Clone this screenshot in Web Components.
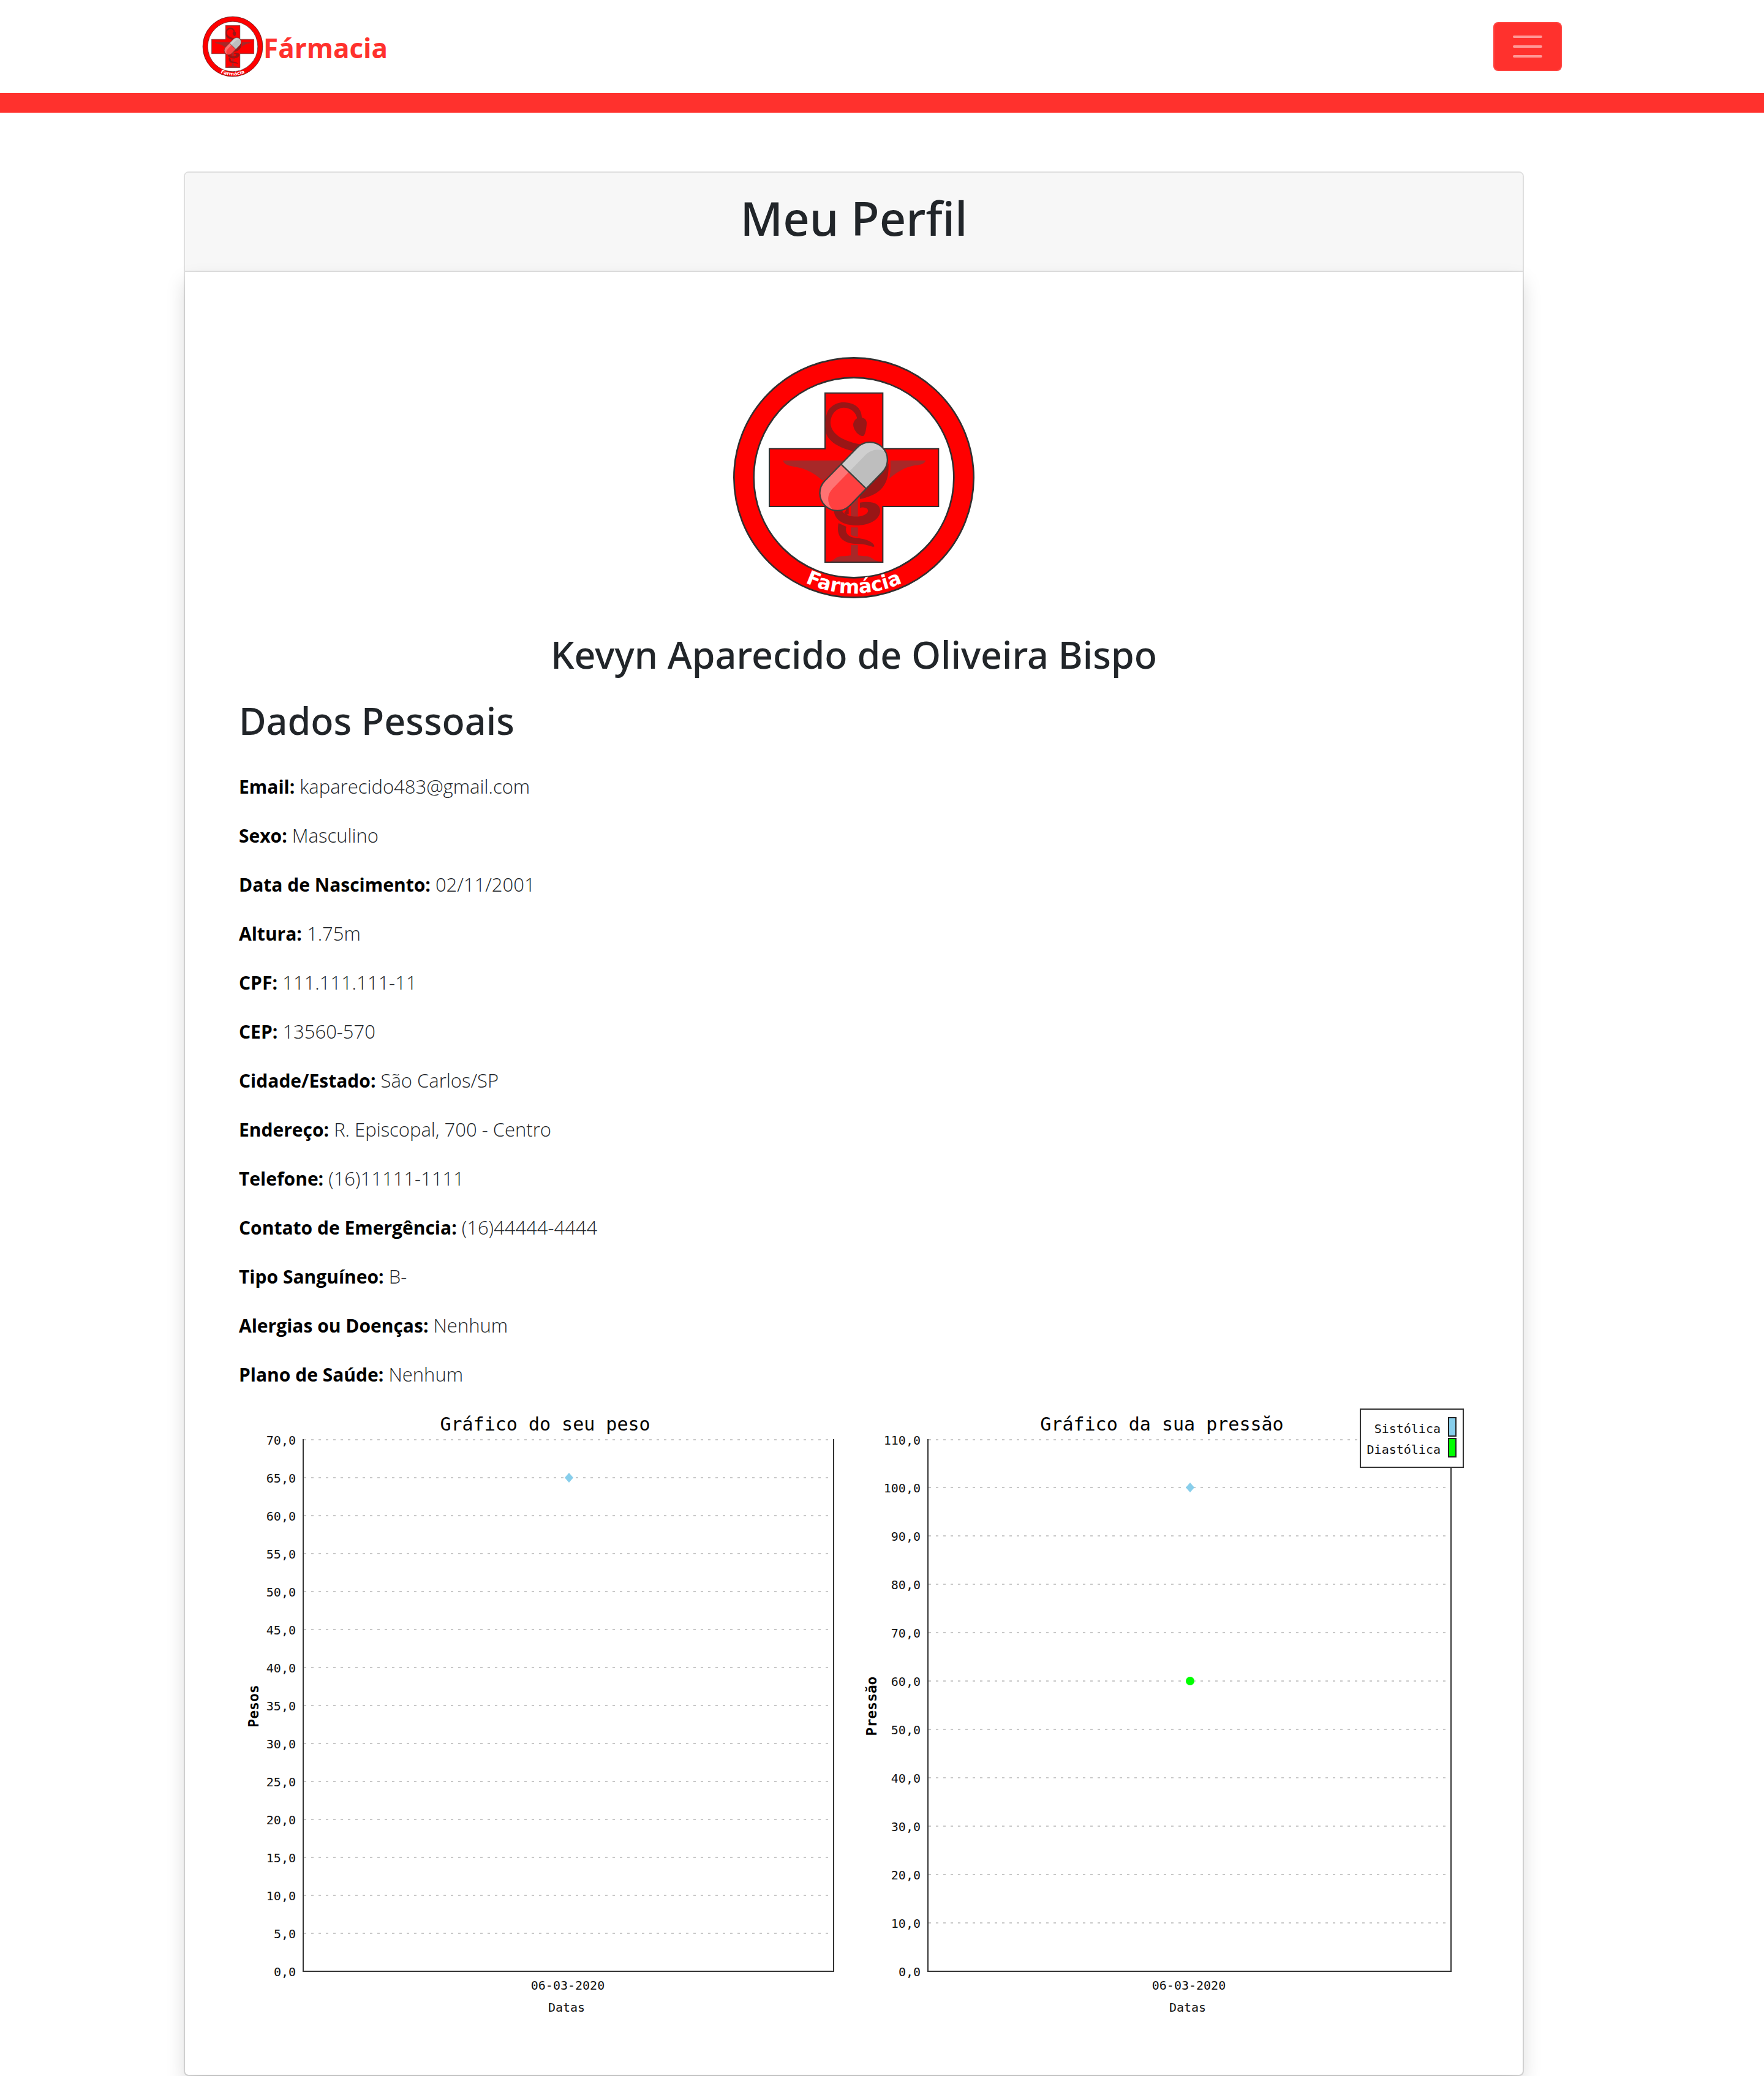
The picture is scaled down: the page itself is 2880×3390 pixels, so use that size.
<!DOCTYPE html>
<html lang="pt-BR">
<head>
<meta charset="utf-8">
<meta name="viewport" content="width=device-width, initial-scale=1">
<title>Meu Perfil</title>
<style>
body { margin: 0; background: #fff; color: #212529; font: 400 32px/48px "Open Sans", "Noto Sans", sans-serif; }
</style>
</head>
<body>
<site-header brand="Fármacia"></site-header>
<profile-card heading="Meu Perfil" name="Kevyn Aparecido de Oliveira Bispo" section="Dados Pessoais">
  <profile-field label="Email:">kaparecido483@gmail.com</profile-field>
  <profile-field label="Sexo:">Masculino</profile-field>
  <profile-field label="Data de Nascimento:">02/11/2001</profile-field>
  <profile-field label="Altura:">1.75m</profile-field>
  <profile-field label="CPF:">111.111.111-11</profile-field>
  <profile-field label="CEP:">13560-570</profile-field>
  <profile-field label="Cidade/Estado:">São Carlos/SP</profile-field>
  <profile-field label="Endereço:">R. Episcopal, 700 - Centro</profile-field>
  <profile-field label="Telefone:">(16)11111-1111</profile-field>
  <profile-field label="Contato de Emergência:">(16)44444-4444</profile-field>
  <profile-field label="Tipo Sanguíneo:">B-</profile-field>
  <profile-field label="Alergias ou Doenças:">Nenhum</profile-field>
  <profile-field label="Plano de Saúde:">Nenhum</profile-field>
  <history-chart slot="charts" kind="peso"></history-chart>
  <history-chart slot="charts" kind="pressao"></history-chart>
</profile-card>

<script>
class PharmacyLogo extends HTMLElement {
  connectedCallback() {
    this.attachShadow({ mode: "open" }).innerHTML = `
<style>
:host { display: block; }
svg { display: block; width: 100%; }
text { font: 700 96px "DejaVu Sans", sans-serif; fill: #fff; }
</style>
<svg viewBox="42 60 1200 1200" role="img" aria-label="Logo Farmácia">
  <circle cx="642" cy="660" r="539" fill="#fff" stroke="#f00" stroke-width="98"/>
  <circle cx="642" cy="660" r="587" fill="none" stroke="#332f2f" stroke-width="8"/>
  <circle cx="642" cy="660" r="490" fill="none" stroke="#332f2f" stroke-width="8"/>
  <path d="M501 245H784V518H1057V801H784V1074H501V801H228V518H501Z" fill="#f00" stroke="#332f2f" stroke-width="6"/>
  <g fill="#a82828">
    <path d="M295 576H600L490 675C440 630 400 615 360 608C330 603 300 598 295 576Z"/>
    <path d="M821 576H994C985 598 960 597 930 602C890 610 850 635 815 665C822 640 822 610 821 576Z"/>
    <path d="M627 750H662V851H627ZM627 904H662V950Q645 948 627 941Z"/>
    <path d="M525 1071C545 1068 550 1045 585 1045Q615 1044 627 1040V990H662V1040Q675 1044 705 1045C735 1048 735 1068 768 1071Z"/>
  </g>
  <g fill="#991616">
    <path d="M683 365C700 372 706 380 705 397C702 430 697 452 688 456C670 460 640 430 639 400C640 384 650 374 658 369C652 338 625 317 592 317C550 320 527 355 528 395C532 450 600 485 680 497L640 530C570 515 515 480 506 440C500 400 502 350 520 325C545 295 575 290 595 291C640 292 680 315 681 365Z"/>
    <path d="M812 590C815 680 790 740 672 765L670 740L800 610Z"/>
    <path d="M672 782C740 772 772 790 771 825C768 870 710 895 650 894C590 892 550 870 543 820L585 822C592 845 640 855 675 849C720 838 720 812 695 807Q685 804 672 808Z"/>
    <path d="M617 806V838L605 843L594 832Q604 825 604 812Z"/>
    <path d="M567 883L605 900C598 930 612 950 650 955C700 959 738 975 743 996C735 1006 715 983 650 984C590 982 553 950 567 883Z"/>
  </g>
  <g transform="translate(641 654) rotate(-45.7)">
    <path d="M0 -86H-114A86 86 0 0 0 -114 86H0Z" fill="#ff4040"/>
    <path d="M0 -86H114A86 86 0 0 1 114 86H0Z" fill="#bebebe"/>
    <path d="M-189 38C-182 -12 -150 -32 -110 -32H110C150 -32 178 -14 194 18A86 86 0 0 0 114 -86H-114A86 86 0 0 0 -189 38Z" fill="#fff" opacity=".27"/>
    <path d="M0 -86V86" stroke="#40403c" stroke-width="7"/>
    <rect x="-200" y="-86" width="400" height="172" rx="86" fill="none" stroke="#40403c" stroke-width="7"/>
  </g>
  <path id="arc" d="M75 660A567 567 0 0 0 1209 660" fill="none"/>
  <text text-anchor="middle"><textPath href="#arc" startOffset="50%">Farmácia</textPath></text>
</svg>`;
  }
}

class SiteHeader extends HTMLElement {
  connectedCallback() {
    this.attachShadow({ mode: "open" }).innerHTML = `
<style>
:host { display: block; background: #fff; border-bottom: 32px solid #ff312d; }
nav { box-sizing: border-box; max-width: 2280px; margin: 0 auto; padding: 26px 30px; display: flex; align-items: center; justify-content: space-between; }
a { display: flex; align-items: center; color: #ff312d; font-size: 44px; line-height: 72px; font-weight: 700; text-decoration: none; }
span { padding-top: 4px; }
pharmacy-logo { width: 100px; }
button { box-sizing: border-box; width: 112px; height: 80px; padding: 0 30px; display: flex; flex-direction: column; justify-content: center; gap: 12px; background: #ff312d; border: 2px solid #ff4642; border-radius: 8px; }
i { display: block; width: 48px; height: 4px; border-radius: 2px; background: #ff9896; }
</style>
<nav>
  <a href="#"><pharmacy-logo></pharmacy-logo><span></span></a>
  <button type="button" aria-label="Abrir menu"><i></i><i></i><i></i></button>
</nav>`;
    this.shadowRoot.querySelector("span").textContent = this.getAttribute("brand");
  }
}

class ProfileField extends HTMLElement {
  connectedCallback() {
    this.attachShadow({ mode: "open" }).innerHTML = `
<style>
:host { display: block; }
p { margin: 0; font-size: 31px; font-weight: 300; }
b { font-size: 30px; line-height: 40px; font-weight: 700; color: #000; }
</style>
<p><b></b> <slot></slot></p>`;
    this.shadowRoot.querySelector("b").textContent = this.getAttribute("label");
  }
}

class ProfileCard extends HTMLElement {
  connectedCallback() {
    this.attachShadow({ mode: "open" }).innerHTML = `
<style>
:host { box-sizing: border-box; display: block; max-width: 2280px; margin: 96px auto 0; padding-right: 92px; }
article { border: 2px solid #dfdfdf; border-radius: 8px; }
header { padding: 26px 40px 38px; background: #f7f7f7; border-bottom: 2px solid #dfdfdf; border-radius: 6px 6px 0 0; text-align: center; }
h1, h2 { margin: 0; font-family: "Noto Sans", sans-serif; font-weight: 500; }
h1 { font-size: 76px; line-height: 96px; }
h2 { font-size: 61px; line-height: 77px; }
.body { display: flex; flex-direction: column; padding: 136px 88px 84px; border-radius: 0 0 6px 6px; box-shadow: 0 16px 32px rgba(0,0,0,.15); }
pharmacy-logo { width: 400px; align-self: center; }
.name { margin: 50px 0 31px; text-align: center; }
.fields { display: flex; flex-direction: column; gap: 32px; margin: 45px 0 32px; }
.charts { display: flex; }
::slotted(history-chart) { flex: 1; min-width: 0; }
</style>
<article>
  <header><h1></h1></header>
  <div class="body">
    <pharmacy-logo></pharmacy-logo>
    <h2 class="name"></h2>
    <h2 class="section"></h2>
    <div class="fields"><slot></slot></div>
    <div class="charts"><slot name="charts"></slot></div>
  </div>
</article>`;
    const set = (sel, attr) => this.shadowRoot.querySelector(sel).textContent = this.getAttribute(attr);
    set("h1", "heading");
    set(".name", "name");
    set(".section", "section");
  }
}

const CHARTS = {
  peso: {
    title: "Gráfico do seu peso", titleX: 500, axis: "Pesos", axisX: 32,
    left: 105, right: 971, max: 70, step: 5, labelX: 93,
    date: "06-03-2020", dateX: 537, footX: 535,
    points: [{ x: 539, value: 65, shape: "diamond" }]
  },
  pressao: {
    title: "Gráfico da sua pressăo", titleX: 503, axis: "Pressăo", axisX: 37,
    left: 121, right: 975, max: 110, step: 10, labelX: 109,
    date: "06-03-2020", dateX: 547, footX: 545,
    points: [{ x: 549, value: 100, shape: "diamond" }, { x: 549, value: 60, shape: "dot" }],
    legend: [["Sistólica", "#87ceeb"], ["Diastólica", "#00ff00"]]
  }
};

class HistoryChart extends HTMLElement {
  connectedCallback() {
    const c = CHARTS[this.getAttribute("kind")];
    const top = 51, bottom = 919;
    const y = v => Math.floor(bottom - v / c.max * (bottom - top));
    let out = "";
    for (let v = 0; v <= c.max; v += c.step) {
      if (v) out += `<path class="grid" d="M${c.left + 1} ${y(v)}H${c.right - 6}"/>`;
      out += `<text x="${c.labelX}" y="${y(v) + 8}" text-anchor="end">${v},0</text>`;
    }
    out += `<path class="axis" d="M${c.left} ${top - 1}V${bottom}H${c.right}V${top - 1}"/>`;
    for (const p of c.points) {
      out += p.shape === "diamond"
        ? `<path fill="#87ceeb" d="M${p.x} ${y(p.value) - 8}l7 8l-7 8l-7 -8Z"/>`
        : `<circle fill="#00ff00" cx="${p.x}" cy="${y(p.value)}" r="7"/>`;
    }
    if (c.legend) {
      out += `<rect x="827" y="1" width="168" height="95" fill="#fff" stroke="#333" stroke-width="2"/>`;
      c.legend.forEach(([name, color], i) => {
        out += `<text x="958" y="${40 + 34 * i}" text-anchor="end">${name}</text>`
          + `<rect x="971" y="${15 + 34 * i}" width="12" height="30" fill="${color}" stroke="#222" stroke-width="2"/>`;
      });
    }
    this.attachShadow({ mode: "open" }).innerHTML = `
<style>
:host { display: block; }
svg { display: block; width: 100%; }
text { font: 20px "DejaVu Sans Mono", monospace; fill: #111; }
.title { font-size: 30px; fill: #000; }
.side { font-size: 23px; font-weight: 700; fill: #000; }
.grid { stroke: #c8c8c8; stroke-width: 2; stroke-dasharray: 4 8; }
.axis { fill: none; stroke: #333; stroke-width: 2; }
</style>
<svg viewBox="0 0 1004 1004">
  <text class="title" x="${c.titleX}" y="36" text-anchor="middle">${c.title}</text>
  ${out}
  <text class="side" transform="translate(${c.axisX} 486) rotate(-90)" text-anchor="middle">${c.axis}</text>
  <text x="${c.dateX}" y="949" text-anchor="middle">${c.date}</text>
  <text x="${c.footX}" y="985" text-anchor="middle">Datas</text>
</svg>`;
  }
}

customElements.define("pharmacy-logo", PharmacyLogo);
customElements.define("site-header", SiteHeader);
customElements.define("profile-field", ProfileField);
customElements.define("profile-card", ProfileCard);
customElements.define("history-chart", HistoryChart);
</script>
</body>
</html>
